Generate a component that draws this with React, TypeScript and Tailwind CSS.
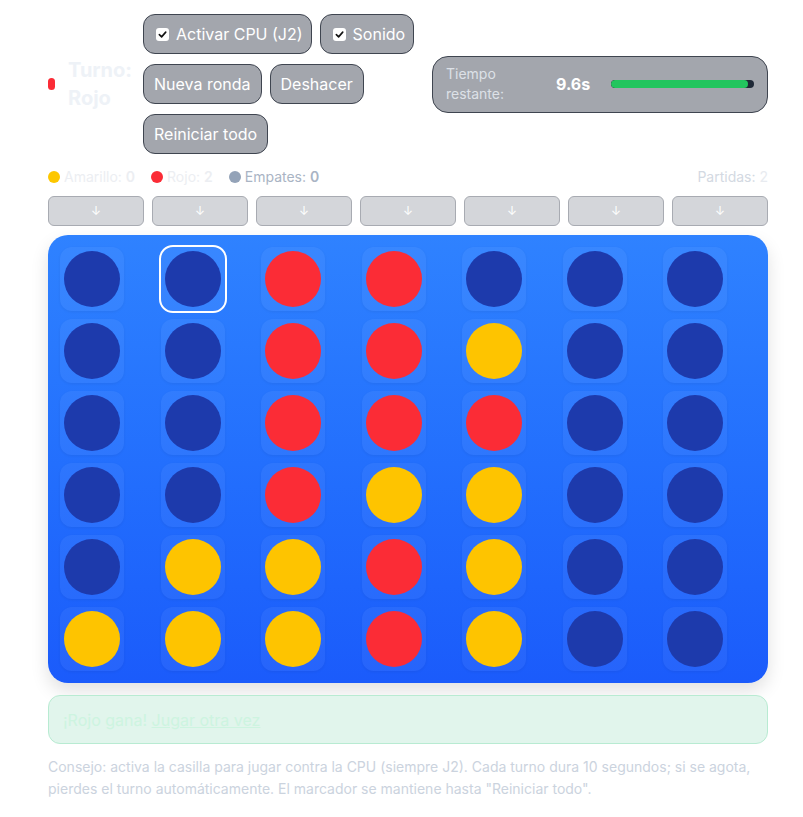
import React from "react";

type C = "E" | "R" | "Y";
const board: C[][] = [
  ["E", "E", "R", "R", "E", "E", "E"],
  ["E", "E", "R", "R", "Y", "E", "E"],
  ["E", "E", "R", "R", "R", "E", "E"],
  ["E", "E", "R", "Y", "Y", "E", "E"],
  ["E", "Y", "Y", "R", "Y", "E", "E"],
  ["Y", "Y", "Y", "R", "Y", "E", "E"],
];

function Check() {
  return (
    <span className="w-[13px] h-[13px] rounded-[3px] bg-white flex items-center justify-center shrink-0">
      <svg width="9" height="9" viewBox="0 0 10 10">
        <path d="M1.5 5.2 L4 7.6 L8.6 2.4" fill="none" stroke="#111" strokeWidth="1.8" strokeLinecap="round" strokeLinejoin="round" />
      </svg>
    </span>
  );
}

const base =
  "h-10 rounded-xl bg-[#a3a6ad] border border-[#3f4550] text-white text-base flex items-center whitespace-nowrap";
const btn = base + " px-[10px]";
const chk = base + " pl-3 pr-2 gap-[7px]";

export default function App() {
  return (
    <div className="w-[803px] min-h-[817px] bg-white pt-[14px]" style={{ fontFamily: "Inter, 'Noto Sans', sans-serif" }}>
      <div className="ml-12 w-[720px]">
        <div className="flex items-center">
          <div className="w-[95px] flex items-center shrink-0">
            <span className="w-[7px] h-3 rounded-full bg-[#fb2c36] shrink-0" />
            <span className="ml-[13px] text-xl font-bold leading-7 text-[#eef2f7] w-[60px]">Turno: Rojo</span>
          </div>
          <div className="w-[285px] flex flex-wrap gap-x-2 gap-y-[10px] shrink-0">
            <div className={chk}>
              <Check />
              <span>Activar CPU (J2)</span>
            </div>
            <div className={chk}>
              <Check />
              <span>Sonido</span>
            </div>
            <div className={btn}>Nueva ronda</div>
            <div className={btn}>Deshacer</div>
            <div className={btn}>Reiniciar todo</div>
          </div>
          <div className="ml-auto w-[336px] h-[57px] rounded-2xl bg-[#a3a6ad] border border-[#3f4550] flex items-center px-[13px]">
            <div className="w-[100px] text-sm leading-5 text-[#dde1e7]">Tiempo<br />restante:</div>
            <div className="ml-[10px] text-base font-bold text-white">9.6s</div>
            <div className="ml-[21px] flex-1 h-2 rounded-full bg-[#1f2937] overflow-hidden">
              <div className="h-full bg-[#22c55e] rounded-full" style={{ width: "96%" }} />
            </div>
          </div>
        </div>

        <div className="mt-[13px] flex items-center justify-between text-sm leading-5">
          <div className="flex items-center gap-4">
            <div className="flex items-center gap-1">
              <span className="w-3 h-3 rounded-full bg-[#fdc700]" />
              <span className="text-[#eceef2]">Amarillo: <b className="font-semibold">0</b></span>
            </div>
            <div className="flex items-center gap-1">
              <span className="w-3 h-3 rounded-full bg-[#fb2c36]" />
              <span className="text-[#eceef2]">Rojo: <b className="font-semibold">2</b></span>
            </div>
            <div className="flex items-center gap-1">
              <span className="w-3 h-3 rounded-full bg-[#94a3b8]" />
              <span className="text-[#a9b4c4]">Empates: <b className="font-semibold">0</b></span>
            </div>
          </div>
          <div className="text-[#d3d9e2]">Partidas: <span className="text-[#e8ebf0]">2</span></div>
        </div>

        <div className="mt-[9px] grid grid-cols-7 gap-2">
          {Array.from({ length: 7 }).map((_, i) => (
            <div key={i} className="h-[30px] rounded-md bg-[#d4d6da] border border-[#a8abb2] flex items-center justify-center text-white text-xs">
              ↓
            </div>
          ))}
        </div>

        <div className="mt-[9px] rounded-[20px] bg-gradient-to-b from-[#2f82ff] to-[#1b5bfb] p-3 shadow-[0_8px_18px_rgba(0,0,0,0.12)]">
          <div className="grid grid-cols-7 gap-2">
            {board.flatMap((row, r) =>
              row.map((c, ci) => {
                const sel = r === 0 && ci === 1;
                return (
                  <div
                    key={`${r}-${ci}`}
                    className={
                      "w-16 h-16 rounded-xl bg-white/5 flex items-center justify-center shadow-[0_1px_3px_rgba(0,0,0,0.06)] " +
                      (sel ? "outline-2 outline-white outline-offset-0" : "")
                    }
                  >
                    <div
                      className={
                        "w-14 h-14 rounded-full " +
                        (c === "R" ? "bg-[#fb2c36]" : c === "Y" ? "bg-[#fec400]" : "bg-[#1d3aac]")
                      }
                    />
                  </div>
                );
              })
            )}
          </div>
        </div>

        <div className="mt-3 h-[49px] rounded-xl border border-[#b8ebd2] bg-[#e1f5ec] flex items-center px-[14px] text-base text-[#cdf4e0]">
          <span>¡Rojo gana!&nbsp;</span>
          <span className="underline">Jugar otra vez</span>
        </div>

        <p className="mt-3 text-sm leading-[22px] text-[#cbd3de]">
          Consejo: activa la casilla para jugar contra la CPU (siempre J2). Cada turno dura 10 segundos; si se agota, pierdes el turno automáticamente. El marcador se mantiene hasta "Reiniciar todo".
        </p>
      </div>
    </div>
  );
}
